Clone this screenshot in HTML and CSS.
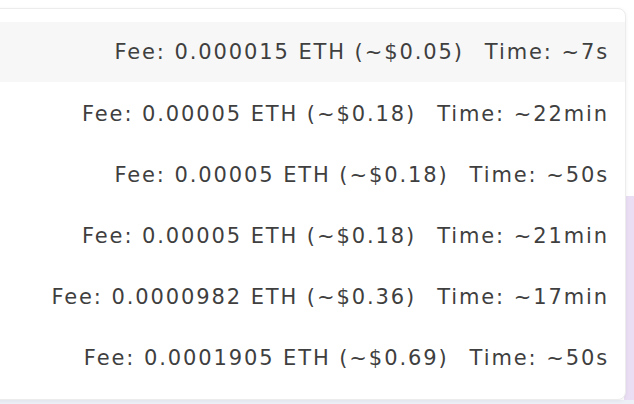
FILE: index.html
```html
<!DOCTYPE html>
<html>
<head>
<meta charset="utf-8">
<link rel="stylesheet" href="styles.css">
</head>
<body>
<div class="page">
  <div class="side">
    <div class="side-top"></div>
    <div class="side-accent"></div>
  </div>
  <div class="menu">
    <div class="row active"><span class="fee">Fee: 0.000015 ETH (~$0.05)</span><span class="time">Time: ~7s</span></div>
    <div class="row"><span class="fee">Fee: 0.00005 ETH (~$0.18)</span><span class="time">Time: ~22min</span></div>
    <div class="row"><span class="fee">Fee: 0.00005 ETH (~$0.18)</span><span class="time">Time: ~50s</span></div>
    <div class="row"><span class="fee">Fee: 0.00005 ETH (~$0.18)</span><span class="time">Time: ~21min</span></div>
    <div class="row"><span class="fee">Fee: 0.0000982 ETH (~$0.36)</span><span class="time">Time: ~17min</span></div>
    <div class="row"><span class="fee">Fee: 0.0001905 ETH (~$0.69)</span><span class="time">Time: ~50s</span></div>
  </div>
</div>
</body>
</html>
```
FILE: styles.css
```css
html, body {
  margin: 0;
  padding: 0;
}
body {
  width: 634px;
  height: 404px;
  overflow: hidden;
  background: #eef0f8;
  font-family: "DejaVu Sans", sans-serif;
}
.page {
  position: relative;
  width: 634px;
  height: 400px;
  background: #ffffff;
}
.side {
  position: absolute;
  top: 0;
  right: 0;
  width: 10px;
  height: 400px;
  display: flex;
  flex-direction: column;
}
.side-top {
  height: 196px;
  background: #ffffff;
}
.side-accent {
  flex: 1;
  background: #e9def3;
}
.menu {
  position: absolute;
  top: 8px;
  left: -20px;
  width: 646px;
  height: 392px;
  box-sizing: border-box;
  background: #ffffff;
  border: 1px solid #ececec;
  border-radius: 8px;
  box-shadow: 0 1px 4px rgba(0, 0, 0, 0.06);
  padding: 13px 0 11px 0;
}
.row {
  height: 61px;
  display: flex;
  align-items: center;
  justify-content: flex-end;
  padding-right: 16px;
  color: #3f3f3f;
  font-size: 21px;
  letter-spacing: 1.9px;
  white-space: nowrap;
}
.row.active {
  background: #f7f7f7;
  height: 60px;
  margin-bottom: 1px;
}
.time {
  margin-left: 21px;
}
```
